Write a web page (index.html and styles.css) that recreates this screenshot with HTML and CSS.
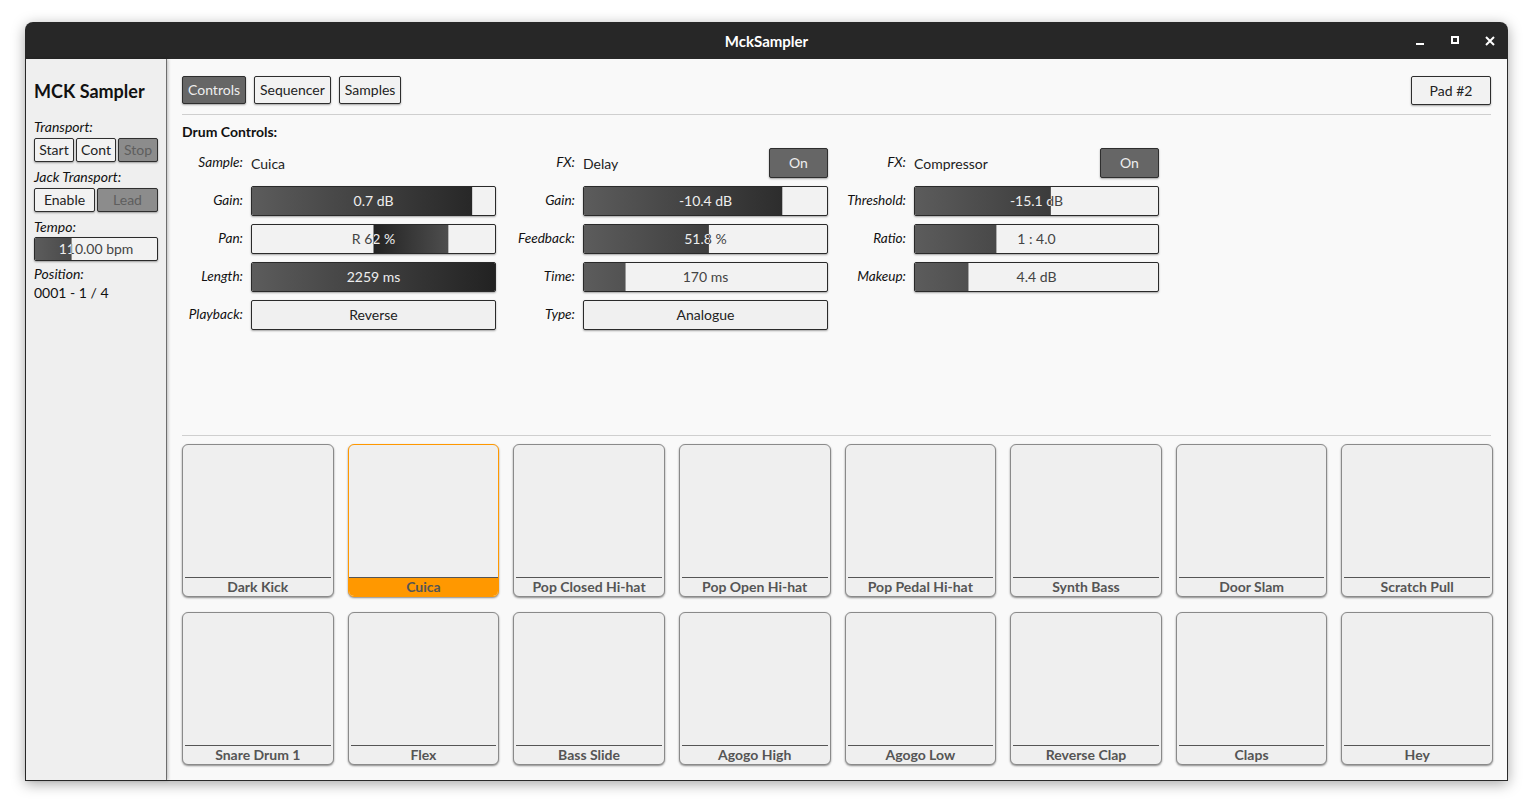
FILE: index.html
```html
<!DOCTYPE html>
<html>
<head>
<meta charset="utf-8">
<link rel="stylesheet" href="styles.css">
</head>
<body>
<div class="window">
  <div class="titlebar">
    <div></div>
    <div class="title">MckSampler</div>
    <div class="wm">
      <span class="wm-btn"><svg width="10" height="10" viewBox="0 0 10 10"><rect x="1" y="7" width="8" height="2" fill="#fff"/></svg></span>
      <span class="wm-btn"><svg width="10" height="10" viewBox="0 0 10 10"><rect x="2" y="1" width="6" height="6" fill="none" stroke="#fff" stroke-width="2"/></svg></span>
      <span class="wm-btn"><svg width="12" height="12" viewBox="0 0 12 12"><path d="M2 2 L10 10 M10 2 L2 10" stroke="#fff" stroke-width="2" fill="none"/></svg></span>
    </div>
  </div>
  <div class="body">
    <aside class="sidebar">
      <h1 class="app-name">MCK Sampler</h1>
      <div class="side-label first">Transport:</div>
      <div class="btn-row">
        <button class="btn">Start</button>
        <button class="btn">Cont</button>
        <button class="btn disabled">Stop</button>
      </div>
      <div class="side-label">Jack Transport:</div>
      <div class="btn-row">
        <button class="btn">Enable</button>
        <button class="btn disabled">Lead</button>
      </div>
      <div class="side-label">Tempo:</div>
      <div class="slider tempo">
        <span class="val">110.00 bpm</span>
        <div class="fill" style="--l:0%;--r:70%"><span class="val">110.00 bpm</span></div>
      </div>
      <div class="side-label pos">Position:</div>
      <div class="side-value">0001 - 1 / 4</div>
    </aside>
    <main class="main">
      <div class="tabs">
        <div class="tab-group">
          <button class="btn tab active">Controls</button>
          <button class="btn tab">Sequencer</button>
          <button class="btn tab">Samples</button>
        </div>
        <button class="btn pad-sel">Pad #2</button>
      </div>
      <div class="sep"></div>
      <div class="heading">Drum Controls:</div>
      <div class="controls">
        <div class="group g1">
          <div class="lbl">Sample:</div>
          <div class="value-cell"><span class="value">Cuica</span></div>

          <div class="lbl">Gain:</div>
          <div class="slider"><span class="val">0.7 dB</span><div class="fill" style="--l:0%;--r:9.4%"><span class="val">0.7 dB</span></div></div>

          <div class="lbl">Pan:</div>
          <div class="slider"><span class="val">R 62 %</span><div class="fill rev" style="--l:50%;--r:19.2%"><span class="val">R 62 %</span></div></div>

          <div class="lbl">Length:</div>
          <div class="slider"><span class="val">2259 ms</span><div class="fill" style="--l:0%;--r:0%"><span class="val">2259 ms</span></div></div>

          <div class="lbl">Playback:</div>
          <div class="combo">Reverse</div>
        </div>
        <div class="group g2">
          <div class="lbl">FX:</div>
          <div class="value-cell"><span class="value">Delay</span><button class="btn on">On</button></div>

          <div class="lbl">Gain:</div>
          <div class="slider"><span class="val">-10.4 dB</span><div class="fill" style="--l:0%;--r:18.4%"><span class="val">-10.4 dB</span></div></div>

          <div class="lbl">Feedback:</div>
          <div class="slider"><span class="val">51.8 %</span><div class="fill" style="--l:0%;--r:48.6%"><span class="val">51.8 %</span></div></div>

          <div class="lbl">Time:</div>
          <div class="slider"><span class="val">170 ms</span><div class="fill" style="--l:0%;--r:82.9%"><span class="val">170 ms</span></div></div>

          <div class="lbl">Type:</div>
          <div class="combo">Analogue</div>
        </div>
        <div class="group g3">
          <div class="lbl">FX:</div>
          <div class="value-cell"><span class="value">Compressor</span><button class="btn on">On</button></div>

          <div class="lbl">Threshold:</div>
          <div class="slider"><span class="val">-15.1 dB</span><div class="fill" style="--l:0%;--r:44.1%"><span class="val">-15.1 dB</span></div></div>

          <div class="lbl">Ratio:</div>
          <div class="slider"><span class="val">1 : 4.0</span><div class="fill" style="--l:0%;--r:66.5%"><span class="val">1 : 4.0</span></div></div>

          <div class="lbl">Makeup:</div>
          <div class="slider"><span class="val">4.4 dB</span><div class="fill" style="--l:0%;--r:78%"><span class="val">4.4 dB</span></div></div>
        </div>
      </div>
      <div class="spacer"></div>
      <div class="sep"></div>
      <div class="pads">
        <div class="pad"><div class="pad-area"></div><div class="pad-label">Dark Kick</div></div>
        <div class="pad selected"><div class="pad-area"></div><div class="pad-label">Cuica</div></div>
        <div class="pad"><div class="pad-area"></div><div class="pad-label">Pop Closed Hi-hat</div></div>
        <div class="pad"><div class="pad-area"></div><div class="pad-label">Pop Open Hi-hat</div></div>
        <div class="pad"><div class="pad-area"></div><div class="pad-label">Pop Pedal Hi-hat</div></div>
        <div class="pad"><div class="pad-area"></div><div class="pad-label">Synth Bass</div></div>
        <div class="pad"><div class="pad-area"></div><div class="pad-label">Door Slam</div></div>
        <div class="pad"><div class="pad-area"></div><div class="pad-label">Scratch Pull</div></div>
        <div class="pad"><div class="pad-area"></div><div class="pad-label">Snare Drum 1</div></div>
        <div class="pad"><div class="pad-area"></div><div class="pad-label">Flex</div></div>
        <div class="pad"><div class="pad-area"></div><div class="pad-label">Bass Slide</div></div>
        <div class="pad"><div class="pad-area"></div><div class="pad-label">Agogo High</div></div>
        <div class="pad"><div class="pad-area"></div><div class="pad-label">Agogo Low</div></div>
        <div class="pad"><div class="pad-area"></div><div class="pad-label">Reverse Clap</div></div>
        <div class="pad"><div class="pad-area"></div><div class="pad-label">Claps</div></div>
        <div class="pad"><div class="pad-area"></div><div class="pad-label">Hey</div></div>
      </div>
    </main>
  </div>
</div>
</body>
</html>
```

FILE: styles.css
```css
* { box-sizing: border-box; }
html, body { margin: 0; padding: 0; }
body {
  background: #ffffff;
  font-family: Lato, "Open Sans", sans-serif;
  color: #222;
  width: 1533px;
  height: 809px;
  overflow: hidden;
}
.window {
  margin: 22px 0 0 25px;
  width: 1483px;
  height: 759px;
  display: flex;
  flex-direction: column;
  border-radius: 8px 8px 0 0;
  box-shadow: 0 3px 14px rgba(0,0,0,0.35);
}
.titlebar {
  height: 37px;
  background: #272727;
  border-radius: 8px 8px 0 0;
  display: grid;
  grid-template-columns: 1fr auto 1fr;
  align-items: center;
}
.title {
  color: #ffffff;
  font-weight: bold;
  font-size: 15px;
}
.wm {
  display: flex;
  justify-content: flex-end;
  gap: 1px;
  padding-right: 1px;
}
.wm-btn {
  width: 34px;
  height: 37px;
  display: flex;
  align-items: center;
  justify-content: center;
}
.body {
  flex: 1;
  display: flex;
  border: 1px solid #2a2a2a;
  border-top: none;
  min-height: 0;
}
.sidebar {
  width: 141px;
  background: #efefef;
  border-right: 1px solid #6e6e6e;
  box-shadow: 1px 0 3px rgba(0,0,0,0.25);
  padding: 20px 8px 0 8px;
  position: relative;
  z-index: 1;
}
.app-name {
  margin: 0;
  font-size: 18px;
  line-height: 24px;
  font-weight: bold;
  color: #111;
}
.side-label {
  font-style: italic;
  font-size: 14px;
  line-height: 16px;
  margin-top: 7px;
  color: #111;
}
.side-label.first { margin-top: 16px; }
.side-label.pos { margin-top: 5px; }
.side-value {
  font-size: 14px;
  line-height: 16px;
  margin-top: 3px;
  color: #111;
}
.btn-row {
  display: flex;
  gap: 2px;
  margin-top: 3px;
}
.btn-row .btn { flex: 1; height: 24px; padding: 0; }
.btn {
  font-family: Lato, "Open Sans", sans-serif;
  font-size: 14px;
  color: #222;
  background: #f2f2f2;
  border: 1px solid #2e2e2e;
  border-radius: 2px;
  box-shadow: 0 1px 2px rgba(0,0,0,0.35);
  padding: 0 5px;
  margin: 0;
  line-height: 1;
}
.btn.disabled {
  background: #8c8c8c;
  color: #5e5e5e;
}
.slider.tempo {
  margin-top: 2px;
  height: 24px;
  width: 124px;
}
.main {
  flex: 1;
  background: #f9f9f9;
  padding: 17px 16px 15px 15px;
  display: flex;
  flex-direction: column;
  min-width: 0;
}
.tabs {
  display: flex;
  justify-content: space-between;
  align-items: flex-start;
  height: 29px;
}
.tab-group { display: flex; gap: 8px; }
.tab { height: 28px; }
.tab.active { background: #666666; color: #eeeeee; }
.pad-sel { width: 80px; height: 29px; }
.sep {
  height: 1px;
  background: #cfcfcf;
  margin-top: 9px;
  flex: none;
}
.heading {
  margin-top: 9px;
  font-size: 14px;
  line-height: 16px;
  font-weight: bold;
  color: #111;
}
.controls {
  margin-top: 8px;
  display: flex;
  gap: 8px;
}
.group {
  display: grid;
  grid-auto-rows: 30px;
  row-gap: 8px;
  column-gap: 8px;
}
.g1 { grid-template-columns: 61px 245px; }
.g2 { grid-template-columns: 71px 245px; }
.g3 { grid-template-columns: 70px 245px; }
.lbl {
  font-style: italic;
  font-size: 13.6px;
  line-height: 16px;
  padding-bottom: 2px;
  text-align: right;
  align-self: center;
  color: #111;
  white-space: nowrap;
}
.value-cell {
  display: flex;
  justify-content: space-between;
  align-items: center;
}
.value { font-size: 14px; color: #222; }
.btn.on {
  width: 59px;
  height: 30px;
  background: #666666;
  color: #eeeeee;
}
.slider, .combo {
  position: relative;
  height: 30px;
  border: 1px solid #2a2a2a;
  border-radius: 2px;
  background: #f2f2f2;
  box-shadow: 0 1px 2px rgba(0,0,0,0.35);
  font-size: 14px;
  display: flex;
  align-items: center;
  justify-content: center;
  color: #444;
  overflow: hidden;
  padding-bottom: 1px;
}
.combo { color: #222; background: #f0f0f0; }
.fill {
  position: absolute;
  inset: 0;
  display: flex;
  align-items: center;
  justify-content: center;
  color: #eeeeee;
  padding-bottom: 1px;
  background: linear-gradient(to right, #5c5c5c, #222222);
  clip-path: inset(0 var(--r) 0 var(--l));
}
.fill.rev {
  background: linear-gradient(to right, #222222 50%, #4e4e4e 80.8%);
}
.tempo .fill {
  background: linear-gradient(to right, #5c5c5c, #4a4a4a 30%, #222 100%);
}
.spacer { flex: 1; }
.pads {
  margin-top: 8px;
  margin-right: -2px;
  display: grid;
  grid-template-columns: repeat(8, 1fr);
  grid-template-rows: 153px 153px;
  column-gap: 14px;
  row-gap: 15px;
}
.pad {
  border: 1px solid #8a8a8a;
  border-radius: 6px;
  background: #efefef;
  box-shadow: 0 1px 2px rgba(0,0,0,0.45);
  display: flex;
  flex-direction: column;
  overflow: hidden;
}
.pad-area { flex: 1; }
.pad-label {
  height: 19px;
  margin: 0 2px;
  border-top: 1px solid #555;
  text-align: center;
  font-size: 14px;
  line-height: 18px;
  font-weight: bold;
  color: #555;
}
.pad.selected { border-color: #ff9800; }
.pad.selected .pad-label {
  background: #ff9800;
  margin: 0;
  padding: 0 2px;
  border-top: 1px solid #555;
}
```
